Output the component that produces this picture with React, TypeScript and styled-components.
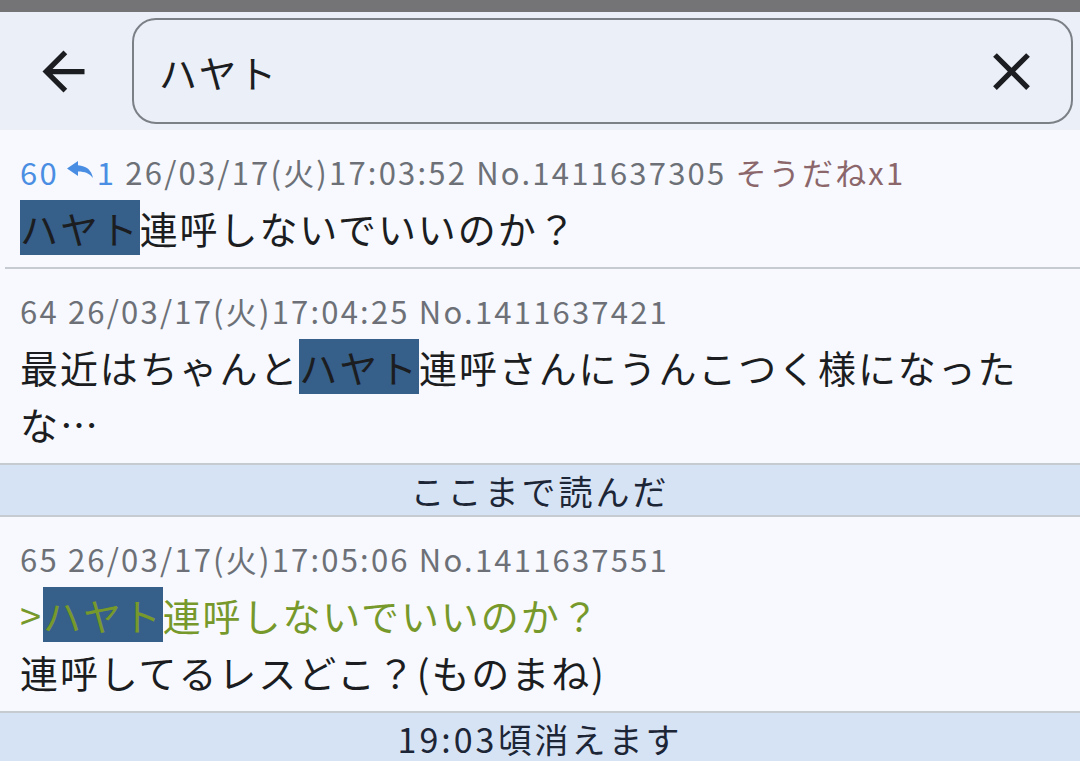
import React from 'react'
import styled, { createGlobalStyle } from 'styled-components'

const GlobalStyle = createGlobalStyle`
  html, body {
    margin: 0;
    padding: 0;
    background: #f7f9fe;
    font-family: "Noto Sans CJK JP", "Noto Sans", sans-serif;
  }
`

const Screen = styled.div`
  width: 1080px;
  height: 761px;
  overflow: hidden;
  display: flex;
  flex-direction: column;
  background: #f7f9fe;
`

const StatusStrip = styled.div`
  height: 12px;
  flex-shrink: 0;
  background: #747476;
`

const Header = styled.div`
  height: 118px;
  flex-shrink: 0;
  background: #ebeff7;
  display: flex;
  align-items: center;
  gap: 6px;
  padding-right: 7px;
  box-sizing: border-box;
`

const BackButton = styled.div`
  width: 126px;
  height: 106px;
  display: flex;
  align-items: center;
  justify-content: center;
  color: #1b1d21;
  svg {
    width: 63px;
    height: 63px;
  }
`

const SearchBox = styled.div`
  flex: 1;
  height: 106px;
  box-sizing: border-box;
  border: 2px solid #7b7f86;
  border-radius: 24px;
  display: flex;
  align-items: center;
  padding: 0 28px 0 25px;
`

const SearchText = styled.div`
  flex: 1;
  font-size: 38px;
  letter-spacing: 1.6px;
  color: #1b1d21;
`

const ClearButton = styled.div`
  display: flex;
  color: #1b1d21;
  svg {
    width: 63px;
    height: 63px;
  }
`

const Post = styled.div<{ $inset?: boolean }>`
  flex-shrink: 0;
  padding: 17px 0 11px 20px;
  border-bottom: 2px solid #c6cbd2;
  ${(p) => (p.$inset ? 'margin-left: 5px; padding-left: 15px;' : '')}
`

const Meta = styled.div`
  display: flex;
  align-items: center;
  height: 48px;
  font-size: 31px;
  letter-spacing: 2.2px;
  color: #6d7177;
  white-space: pre;
`

const Num = styled.span`
  color: #4a8ee3;
`

const ReplyIcon = styled.svg`
  width: 26px;
  height: 17px;
  margin: 0 4px 3px 8px;
  color: #4a8ee3;
`

const Sodane = styled.span`
  color: #8b666a;
`

const Body = styled.div<{ $quote?: boolean; $tight?: boolean }>`
  margin-top: ${(p) => (p.$tight ? '0' : '4px')};
  font-size: 38px;
  line-height: 57px;
  letter-spacing: 1.9px;
  color: ${(p) => (p.$quote ? '#77992c' : '#1b1d21')};
`

const Mark = styled.span`
  background: #365f8a;
`

const NoticeBar = styled.div`
  flex-shrink: 0;
  height: 50px;
  background: #d6e3f5;
  border-bottom: 2px solid #c6cbd2;
  display: flex;
  align-items: center;
  justify-content: center;
  font-size: 34px;
  letter-spacing: 3px;
  color: #1d2636;
`

const ArrowBack = () => (
  <svg viewBox="0 0 24 24" fill="currentColor">
    <path d="M20 11H7.83l5.59-5.59L12 4l-8 8 8 8 1.41-1.41L7.83 13H20v-2z" />
  </svg>
)

const CloseIcon = () => (
  <svg viewBox="0 0 24 24" fill="currentColor">
    <path d="M19 6.41L17.59 5 12 10.59 6.41 5 5 6.41 10.59 12 5 17.59 6.41 19 12 13.41 17.59 19 19 17.59 13.41 12z" />
  </svg>
)

const App = () => {
  return (
    <Screen>
      <GlobalStyle />
      <StatusStrip />
      <Header>
        <BackButton>
          <ArrowBack />
        </BackButton>
        <SearchBox>
          <SearchText>ハヤト</SearchText>
          <ClearButton>
            <CloseIcon />
          </ClearButton>
        </SearchBox>
      </Header>

      <Post $inset>
        <Meta>
          <Num>60</Num>
          <ReplyIcon viewBox="0 0 26 17" fill="currentColor">
            <path d="M11 0 L0 7.5 L11 15 V10.5 C18 10.5 22.5 12.5 26 17 C24.5 9 19.5 4.8 11 4.2 Z" />
          </ReplyIcon>
          <Num>1</Num>
          {' 26/03/17(火)17:03:52 No.1411637305 '}
          <Sodane>そうだねx1</Sodane>
        </Meta>
        <Body>
          <Mark>ハヤト</Mark>連呼しないでいいのか？
        </Body>
      </Post>

      <Post>
        <Meta>64 26/03/17(火)17:04:25 No.1411637421</Meta>
        <Body>
          最近はちゃんと<Mark>ハヤト</Mark>連呼さんにうんこつく様になったな…
        </Body>
      </Post>

      <NoticeBar>ここまで読んだ</NoticeBar>

      <Post>
        <Meta>65 26/03/17(火)17:05:06 No.1411637551</Meta>
        <Body $quote>
          &gt;<Mark>ハヤト</Mark>連呼しないでいいのか？
        </Body>
        <Body $tight>連呼してるレスどこ？(ものまね)</Body>
      </Post>

      <NoticeBar>19:03頃消えます</NoticeBar>
    </Screen>
  )
}

export default App
